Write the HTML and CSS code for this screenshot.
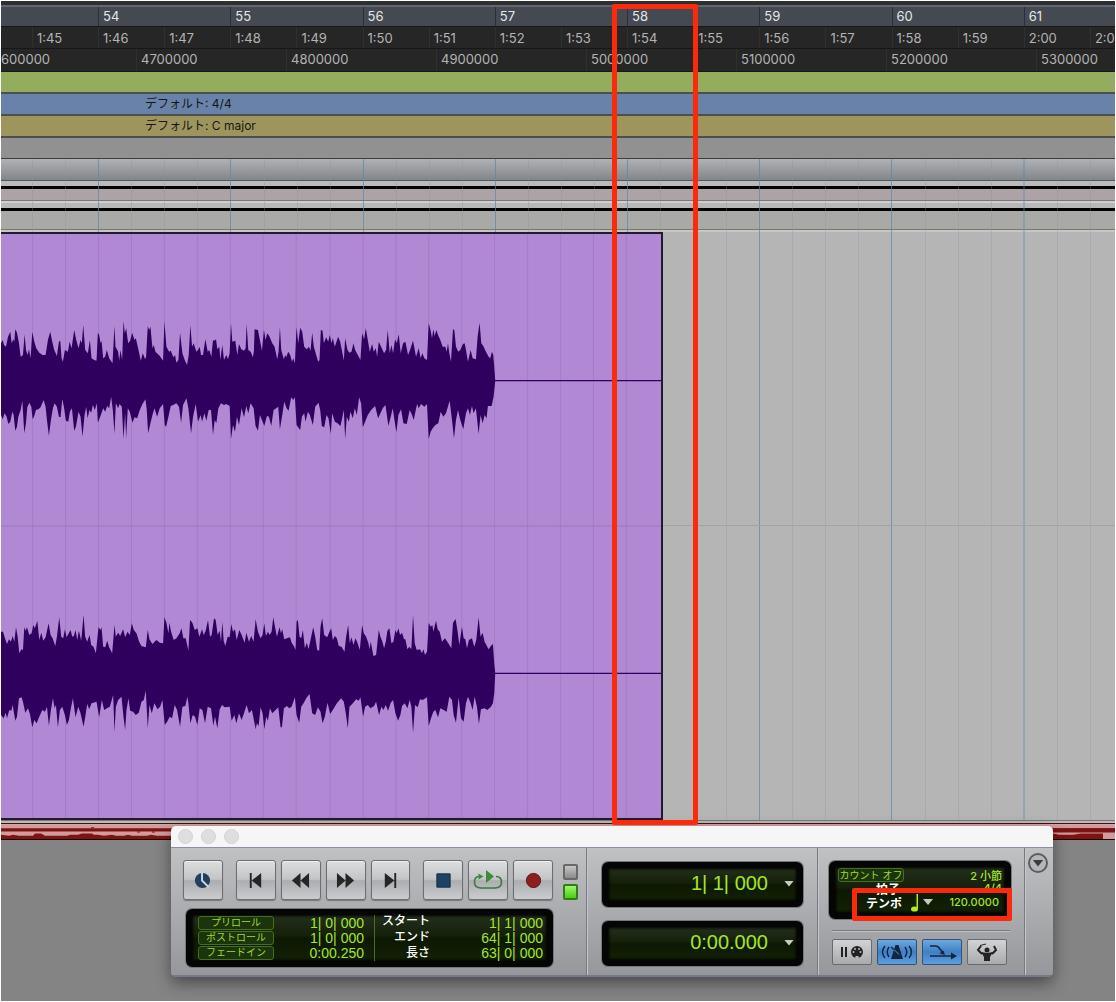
FILE: index.html
```html
<!DOCTYPE html>
<html lang="ja">
<head>
<meta charset="utf-8">
<title>Edit</title>
<link rel="stylesheet" href="styles.css">
</head>
<body>
<main class="editor">
  <div class="top-strip"></div>
  <section class="rulers">
    <div class="ruler ruler-bars"><span></span><span>54</span><span>55</span><span>56</span><span>57</span><span>58</span><span>59</span><span>60</span><span>61</span></div>
    <div class="ruler ruler-time"><span></span><span>1:45</span><span>1:46</span><span>1:47</span><span>1:48</span><span>1:49</span><span>1:50</span><span>1:51</span><span>1:52</span><span>1:53</span><span>1:54</span><span>1:55</span><span>1:56</span><span>1:57</span><span>1:58</span><span>1:59</span><span>2:00</span><span>2:0</span></div>
    <div class="ruler ruler-samples"><span>600000</span><span>4700000</span><span>4800000</span><span>4900000</span><span>5000000</span><span>5100000</span><span>5200000</span><span>5300000</span></div>
    <div class="lane lane-tempo"></div>
    <div class="lane lane-meter">デフォルト: 4/4</div>
    <div class="lane lane-key">デフォルト: C major</div>
    <div class="lane lane-markers"></div>
  </section>

  <section class="tracks">
    <div class="track track-head"></div>
    <div class="track track-pink"></div>
    <div class="track track-olive"></div>
    <svg class="gridlines" viewBox="0 0 1114 10" preserveAspectRatio="none" aria-hidden="true">
      <path class="beat" d="M31.500 0v10M64.500 0v10M130.500 0v10M163.500 0v10M196.500 0v10M263.500 0v10M296.500 0v10M329.500 0v10M395.500 0v10M428.500 0v10M461.500 0v10M527.500 0v10M560.500 0v10M593.500 0v10M659.500 0v10M692.500 0v10M725.500 0v10M791.500 0v10M824.500 0v10M857.500 0v10M924.500 0v10M957.500 0v10M990.500 0v10M1056.500 0v10M1089.500 0v10"/>
      <path class="bar" d="M97.500 0v10M229.500 0v10M362.500 0v10M494.500 0v10M626.500 0v10M758.500 0v10M890.500 0v10M1023 0v10"/>
    </svg>
    <div class="audio-track">
      <div class="clip">
        <svg viewBox="3 702 1983 1752" preserveAspectRatio="none" aria-hidden="true">
          <path class="clip-beat" d="M98 702v1752M197 702v1752M296 702v1752M395 702v1752M494 702v1752M593 702v1752M692 702v1752M791 702v1752M890 702v1752M992 702v1752M1091 702v1752M1190 702v1752M1288 702v1752M1387 702v1752M1486 702v1752M1585 702v1752M1684 702v1752M1783 702v1752M1882 702v1752"/>
          <path class="clip-mid" d="M0 1578h1986"/>
          <path class="silence" d="M1480 1140h506v4h-506zM1480 2018h506v4h-506z"/>
          <path class="wave" d="M3 1100h1481v80H3zM3 1980h1481v80H3z"/>
          <g class="wave" transform="translate(0 900)">
            <path d="M3 240L3 130 8 120 12 135 18 140 24 110 31 95 35 130 40 118 43 125 46 88 51 98 57 130 62 170 69 165 74 103 78 150 83 165 87 148 92 175 97 95 103 125 109 145 118 158 128 165 137 165 144 120 151 95 157 125 163 150 171 168 177 125 181 122 185 175 189 185 195 150 204 155 209 125 215 145 223 90 229 120 236 145 242 120 246 130 250 75 256 150 264 160 270 120 275 175 283 180 290 182 294 98 298 105 302 130 305 122 310 175 316 170 321 150 328 175 338 190 344 78 347 140 355 155 358 182 362 150 367 180 371 63 375 100 379 85 385 130 391 122 397 98 404 120 408 115 414 140 423 182 429 160 436 178 439 170 444 78 448 90 452 80 458 145 462 135 467 155 480 168 490 182 494 63 500 140 508 155 513 152 521 172 526 165 530 188 536 180 541 98 548 160 555 180 562 195 567 165 572 75 577 140 582 130 590 155 595 150 600 140 604 165 610 165 617 118 624 155 629 150 635 170 640 120 644 122 649 118 653 148 659 140 662 180 668 135 673 180 680 165 685 178 690 160 694 70 698 125 707 122 713 165 718 132 725 148 733 152 738 145 741 72 746 150 753 155 760 172 764 150 768 88 768 240Z"/>
            <path d="M3 240L3 345 8 358 14 340 20 350 25 372 31 365 37 335 41 345 46 392 51 380 55 350 62 330 67 302 73 400 78 370 82 322 88 308 94 320 98 358 103 348 108 330 115 328 122 322 131 300 137 320 141 360 147 407 153 360 159 325 164 310 171 320 177 350 182 352 187 298 192 320 198 362 205 365 210 335 216 325 223 392 228 380 236 335 242 350 248 410 254 345 259 320 263 355 269 330 274 338 279 315 285 330 291 310 294 368 301 350 310 325 316 335 322 318 328 325 334 290 339 330 344 402 348 310 355 325 359 312 366 320 371 417 376 340 379 415 384 325 390 335 398 368 404 352 412 355 420 330 428 312 437 298 441 330 445 400 452 370 458 345 464 325 472 350 480 325 490 312 495 375 499 380 506 350 513 318 520 315 530 310 538 320 544 368 550 315 560 295 566 325 574 400 580 350 588 312 595 365 603 345 607 365 614 340 620 362 627 330 634 330 640 405 645 360 650 370 656 325 664 310 673 315 680 312 690 318 694 417 700 375 706 395 712 350 718 375 726 325 733 352 740 318 746 340 753 310 762 325 768 380 770 240Z"/>
            <g transform="translate(750 0)">
              <path d="M10 240L15 88 25 90 37 152 43 90 48 120 53 100 60 110 68 130 75 140 83 178 87 155 91 82 95 150 103 178 107 165 110 172 116 155 122 165 127 185 131 175 136 190 141 80 146 130 152 83 158 95 164 140 172 148 178 140 183 152 188 98 193 140 200 165 206 185 210 180 214 90 219 92 223 130 230 112 236 125 241 105 246 130 250 115 256 140 261 125 266 110 272 125 280 165 283 182 287 115 294 150 300 158 306 155 312 130 317 150 325 165 333 180 338 100 344 118 349 85 355 120 361 155 368 132 373 155 379 145 383 170 388 125 395 140 404 160 410 150 415 90 421 160 426 135 431 160 437 118 442 130 448 103 454 160 461 130 468 125 476 165 482 150 491 122 500 170 508 145 514 175 519 160 525 175 533 180 538 70 543 88 548 115 552 88 556 108 561 90 566 105 572 118 580 140 588 140 592 155 596 130 600 160 605 185 611 88 615 90 620 140 627 155 633 150 641 132 646 130 650 150 656 185 664 150 670 175 680 178 685 110 691 68 696 130 702 138 710 155 718 170 723 175 728 155 732 165 735 200 738 242Z"/>
              <path d="M10 240L18 378 25 392 31 345 37 360 44 378 52 348 58 350 65 378 72 330 80 325 86 320 91 388 98 345 104 305 111 325 117 332 125 292 131 300 136 292 141 375 152 390 157 350 164 340 168 365 175 335 181 345 190 375 197 320 207 308 212 330 217 378 224 382 231 345 237 355 244 402 248 340 256 365 264 370 273 378 280 345 283 330 287 417 292 350 298 365 303 335 310 355 316 325 322 345 329 292 335 310 340 382 347 365 355 345 365 330 377 318 386 355 393 340 400 325 408 315 417 378 424 350 430 325 436 365 441 397 447 345 455 328 462 370 472 372 481 330 488 345 493 360 503 312 508 325 515 312 525 320 533 312 538 417 544 395 550 385 558 375 567 370 574 335 582 350 590 340 601 302 608 360 614 415 620 360 626 330 633 360 642 388 650 340 656 325 662 345 668 318 673 340 680 325 688 402 694 345 700 370 706 345 712 355 716 318 727 318 733 290 738 242Z"/>
            </g>
          </g>
          <g class="wave" transform="translate(0 1800)">
            <path d="M3 220L3 95 9 95 15 115 21 132 27 118 33 125 38 108 43 125 48 82 53 110 58 160 64 148 69 150 73 82 77 92 81 82 88 105 95 100 100 75 105 85 112 62 118 120 124 98 130 122 137 112 146 70 152 105 158 115 166 138 171 110 178 52 184 110 190 115 195 88 200 112 212 90 217 110 222 108 227 90 232 120 237 92 244 122 251 45 256 110 262 125 269 105 274 135 281 140 288 160 296 82 302 90 305 82 310 140 316 142 322 122 328 142 337 160 344 75 348 110 355 98 361 108 370 88 376 112 383 95 390 105 396 70 402 90 410 100 418 125 425 138 438 142 444 90 449 118 458 132 470 120 480 128 490 130 494 52 500 68 506 100 509 68 514 95 522 120 530 115 540 100 545 85 551 115 558 115 566 152 571 60 578 68 585 90 593 85 599 110 607 88 612 105 618 92 625 60 631 110 636 105 643 55 648 60 654 105 660 92 664 125 668 65 672 122 677 138 684 110 690 112 695 72 700 95 706 88 711 120 719 90 726 105 735 128 740 98 748 125 755 108 762 125 768 58 768 220Z"/>
            <path d="M3 220L3 345 11 355 17 338 21 355 28 330 34 332 38 315 46 362 51 350 57 295 65 292 70 310 76 338 84 325 90 342 97 382 103 360 110 370 118 350 127 330 135 335 141 320 147 377 153 330 159 295 164 325 168 315 174 382 180 330 187 320 195 345 201 375 207 360 213 325 219 295 227 352 235 320 242 340 251 380 257 345 262 312 268 328 275 310 290 305 298 352 306 300 313 330 321 325 330 320 340 285 344 397 348 320 355 300 365 290 371 350 376 390 380 330 386 295 391 332 400 335 408 345 417 338 425 305 432 300 438 272 444 385 449 315 456 340 464 310 473 328 481 320 488 300 495 375 502 365 510 350 517 355 525 315 532 330 541 380 548 320 557 318 563 290 566 310 572 370 579 345 586 350 593 375 600 325 608 330 616 370 624 320 634 325 641 377 646 350 653 385 660 328 667 315 675 322 690 320 696 362 704 345 710 370 718 340 726 360 733 340 741 315 748 340 757 330 768 388 770 220Z"/>
            <g transform="translate(750 0)">
              <path d="M10 220L18 58 25 95 33 115 39 105 44 70 49 108 55 95 60 105 66 95 71 52 77 85 82 110 90 82 94 100 98 88 104 118 112 115 121 112 127 130 133 138 138 150 141 65 145 60 150 110 155 115 160 90 166 145 172 128 177 148 184 115 191 82 197 110 203 150 209 152 213 80 218 55 224 105 233 112 240 95 245 85 250 120 256 108 262 115 268 138 276 140 285 155 290 110 296 75 301 130 306 112 312 135 318 115 324 128 331 150 338 75 343 100 350 110 357 130 360 148 364 125 372 168 380 165 388 90 393 110 399 125 404 145 409 125 414 92 420 85 426 130 432 125 438 90 442 100 447 85 452 105 458 98 464 118 468 118 474 148 480 140 486 148 491 45 496 130 502 150 512 148 518 160 522 148 527 165 533 155 538 68 544 80 549 75 552 95 560 62 565 88 571 95 578 125 587 115 596 128 606 145 611 68 619 57 625 95 630 135 638 80 643 115 648 118 653 145 659 120 668 115 675 140 681 120 688 52 694 110 700 98 706 125 718 148 725 138 731 132 735 190 738 220Z"/>
              <path d="M10 220L18 388 22 370 27 378 33 322 39 340 44 388 50 350 55 362 61 325 68 340 78 330 86 322 93 382 97 382 103 325 112 318 119 325 126 320 136 292 141 345 149 368 155 320 162 310 170 295 180 282 188 340 197 345 205 322 213 335 219 370 226 350 234 308 242 342 250 330 262 310 275 295 283 305 289 340 295 385 300 320 310 310 320 298 328 302 333 292 341 350 347 320 355 315 363 325 374 318 380 305 389 345 396 320 402 330 409 315 416 332 424 308 431 300 438 340 446 362 453 345 458 318 466 310 474 325 481 300 486 320 491 398 497 315 505 322 512 298 520 300 533 292 538 378 545 355 552 335 558 330 566 352 573 325 583 330 592 335 600 290 608 300 613 345 620 368 628 292 635 355 643 365 650 310 656 290 664 310 670 330 676 290 683 320 689 372 695 328 706 325 714 330 725 320 731 310 735 280 738 220Z"/>
            </g>
          </g>
        </svg>
      </div>
      <div class="empty"></div>
    </div>
    <div class="track-foot"></div>
  </section>
  <div class="red-track">
    <svg viewBox="0 0 1114 13" preserveAspectRatio="none" aria-hidden="true">
      <path class="red-fill" d="M0 3h1114v3H0zM0 13V9l8 1 4-1 6 1h14l2-2h6l4 2h22l3-1h8l4-1h10l2 1h4l6 1 8-1 4 1h8l4-1 4 1h15l4-1 6 1H882l6-2h20l8 1h14l6-1h12l8 1h22l8-1h14l8 1h20l8-1h16l6 1h14l8-1h22v5z"/>
      <path class="red-fill" d="M90 2h3v1h-3zM136 6h3v1h-3zM151 6h3v1h-3zM1052 3h62v4h-62z"/>
    </svg>
  </div>
  <div class="desk"></div>

  <section class="transport" aria-label="Transport">
    <header class="titlebar"><i></i><i></i><i></i></header>
    <div class="panel">
      <div class="section section-main">
        <div class="controls">
          <button class="key online" aria-label="Online"><svg viewBox="0 0 20 20"><circle cx="10" cy="10" r="8" fill="#20405f"/><path fill="none" stroke="#d4d5d7" stroke-width="2" d="M9.500 1v9l7 7"/></svg></button>
          <button class="key" aria-label="Return to zero"><svg viewBox="0 0 20 20"><path fill="#262626" d="M4 2h2v16H4zM6 10l10-8v16z"/></svg></button>
          <button class="key" aria-label="Rewind"><svg viewBox="0 0 20 20"><path fill="#262626" d="M1 10l9-8v16zM10 10l9-8v16z"/></svg></button>
          <button class="key" aria-label="Fast forward"><svg viewBox="0 0 20 20"><path fill="#262626" d="M19 10L10 2v16zM10 10L1 2v16z"/></svg></button>
          <button class="key" aria-label="Go to end"><svg viewBox="0 0 20 20"><path fill="#262626" d="M14 2h2v16h-2zM14 10L4 2v16z"/></svg></button>
          <button class="key stop" aria-label="Stop"><svg viewBox="0 0 20 20"><path fill="#1d4265" stroke="#142c44" d="M3 3h14v14H3z"/></svg></button>
          <button class="key" aria-label="Play"><svg class="wide" viewBox="0 0 30 20"><path fill="none" stroke="#3d7a3f" stroke-width="1.600" d="M6 6.500C3 6.500 1.500 8.500 1.500 12S3.500 18 8 18h14c4.500 0 6.500-2 6.500-6S26 6.500 23 6.500"/><path fill="#3d8a3c" d="M13 0l8 6.500-8 6.500zM5.500 3.500l5 3-5 3z"/></svg></button>
          <button class="key" aria-label="Record"><svg viewBox="0 0 20 20"><circle cx="10" cy="10" r="7.500" fill="#8d1f1f" stroke="#601515"/></svg></button>
          <div class="leds"><i></i><i class="on"></i></div>
        </div>
        <div class="display display-roll">
          <div class="roll-col roll-buttons"><button>プリロール</button><button>ポストロール</button><button>フェードイン</button></div>
          <div class="roll-col roll-values"><span>1| 0| 000</span><span>1| 0| 000</span><span>0:00.250</span></div>
          <div class="roll-col roll-names"><span>スタート</span><span>エンド</span><span>長さ</span></div>
          <div class="roll-col roll-values last"><span>1| 1| 000</span><span>64| 1| 000</span><span>63| 0| 000</span></div>
        </div>
      </div>
      <div class="section section-counters">
        <div class="display counter"><span>1| 1| 000</span><button class="drop" aria-label="Main counter format"></button></div>
        <div class="display counter"><span>0:00.000</span><button class="drop" aria-label="Sub counter format"></button></div>
      </div>
      <div class="section section-tempo">
        <div class="display tempo">
          <div class="tempo-row"><button class="countoff">カウント オフ</button><span class="small">2 小節</span></div>
          <div class="tempo-row meter"><span class="name">拍子</span><span class="small">4/4</span></div>
          <div class="tempo-row beat-row"><span class="name">テンポ</span><svg class="note" viewBox="0 0 8 18"><ellipse cx="3.500" cy="15" rx="3.500" ry="2.600"/><path d="M5.500 0H7v15H5.500z"/></svg><button class="drop" aria-label="Tempo unit"></button><span class="small">120.0000</span></div>
        </div>
        <hr>
        <div class="modes">
          <button aria-label="Wait for note"><svg viewBox="0 0 32 18"><path fill="#222" d="M5 4h2v10H5zM9 4h2v10H9z"/><circle cx="21" cy="9" r="6" fill="#222"/><g fill="#bbb"><circle cx="17.500" cy="9" r="1"/><circle cx="19" cy="6" r="1"/><circle cx="23" cy="6" r="1"/><circle cx="24.500" cy="9" r="1"/><path d="M19.500 13h3v2h-3z"/></g></svg></button>
          <button class="on" aria-label="Metronome"><svg viewBox="0 0 32 18"><path fill="none" stroke="#12263c" stroke-width="1.400" d="M4 3q-5 6 0 12M8 4q-3.500 5 0 10M28 3q5 6 0 12M24 4q3.500 5 0 10M10 4l7 6"/><path fill="#12263c" d="M14.500 2h3l4.500 14H10z"/><path stroke="#5b9bdb" d="M13 6.500l5 5"/></svg></button>
          <button class="on" aria-label="MIDI merge"><svg viewBox="0 0 32 18"><path fill="none" stroke="#12263c" stroke-width="1.600" d="M4 3h6q2 0 4 3l3 4M4 13h22"/><path fill="#12263c" d="M25 9.500l6 3.500-6 3.500zM19 12l-5.500-1.500 4-3z"/></svg></button>
          <button aria-label="Conductor"><svg viewBox="0 0 32 18"><circle cx="16" cy="7" r="2.500" fill="#222"/><path fill="#222" d="M10 9l6 1 6-1-3 5v4h-6v-4z"/><path fill="none" stroke="#222" stroke-width="2" d="M11 11L7 7l3-4M21 11l4-4-2-4"/><path stroke="#222" d="M9 2.500l6-1.500"/></svg></button>
        </div>
      </div>
      <div class="section section-menu"><button class="menu" aria-label="Options"><i></i></button></div>
    </div>
  </section>
  <div class="mark mark-bar"></div>
  <div class="mark mark-tempo"></div>
</main>
</body>
</html>
```
FILE: styles.css
```css
* { box-sizing: border-box; }
body {
  margin: 0;
  padding: 1px;
  background: #fff;
  font-family: Inter, "Noto Sans CJK JP", sans-serif;
  font-size: 13px;
}
button { margin: 0; padding: 0; font: inherit; }
.editor {
  position: relative;
  display: flex;
  flex-direction: column;
  min-height: calc(100vh - 2px);
  overflow: hidden;
  background: #848484;
}
.top-strip { height: 4px; background: #2d2f31; }

/* rulers */
.ruler, .lane { height: 22px; line-height: 22px; overflow: hidden; }
.ruler { display: grid; background: #262626; color: #b4b4b4; border-bottom: 1px solid #171717; white-space: nowrap; }
.ruler span { min-width: 0; padding-left: 4px; border-left: 1px solid #303030; line-height: 22px; }
.ruler span:first-child { border-left: 0; }
.ruler-bars {
  grid-template-columns: 388fr repeat(7, 529fr) 365fr;
  background: #454a52;
  border-top: 2px solid #62666e;
  color: #e6e7ea;
}
.ruler-bars span { border-left-color: #2c3036; line-height: 19px; }
.ruler-time { grid-template-columns: 247fr repeat(16, 529fr) 201fr; }
.ruler-samples { grid-template-columns: 135fr repeat(6, 150fr) 79fr; height: 23px; }
.ruler-samples span { line-height: 21px; }
.ruler-samples span:first-child { padding-left: 0; }
.lane { padding-left: 144px; line-height: 20px; color: #161616; border-bottom: 2px solid #4d4f4f; }
.lane-tempo { background: #94ac5d; }
.lane-meter { background: #6882a9; }
.lane-key { background: #9e955e; }
.lane-markers { height: 21px; background: #919191; border-bottom: 1px solid #3c3d3e; }
.lane-meter, .lane-key { font-size: 12px; }

/* tracks */
.tracks { position: relative; background: #b5b5b5; }
.track { height: 22px; }
.track-head { background: linear-gradient(#b0b2b5, #82858a); border-bottom: 1px solid #55585a; }
.track-pink { border-top: 5px solid #bbb; border-bottom: 2px solid #cfcfcf; background: linear-gradient(#000 3px, #ada3a7 3px 14px, #777 14px); }
.track-olive { height: 29px; border-top: 5px solid #b9b8b9; border-bottom: 2px solid #c6c6c4; background: linear-gradient(#000 3px, #a9aaa5 3px 21px, #777 21px); }
.gridlines { position: absolute; left: 0; top: 0; width: 100%; height: 100%; }
.gridlines path, .clip-beat, .clip-mid { vector-effect: non-scaling-stroke; fill: none; }
.gridlines .beat { stroke: #8f90a8; stroke-opacity: .3; }
.gridlines .bar { stroke: #5a86ac; stroke-opacity: .7; }
.audio-track { position: relative; display: grid; grid-template-columns: 662fr 452fr; height: 588px; }
.clip { background: #b088d3; border: solid #241a2e; border-width: 2px 2px 2px 0; }
.clip svg { display: block; width: 100%; height: 100%; }
.clip-beat { stroke: #8d6bb2; stroke-opacity: .35; }
.clip-mid { stroke: #9878b6; }
.silence, .wave { fill: #2f005e; }
.empty { background: linear-gradient(#a3a3a3, #a3a3a3) 0 293px / 100% 1px no-repeat; }
.track-foot { position: relative; height: 5px; background: linear-gradient(#777 1px, #bbb 1px 3px, #3c1512 3px 4px, #d9a3a3 4px); }
.red-track { height: 15px; background: #d39c9c; border-bottom: 1px solid #240505; }
.red-track svg { display: block; width: 100%; height: 14px; }
.red-fill { fill: #7d1414; }
.desk { flex: 1; min-height: 161px; background: #848484; }

/* transport window */
.transport {
  position: absolute;
  left: 170px;
  top: 825px;
  width: 882px;
  border-radius: 5px;
  overflow: hidden;
  box-shadow: 0 6px 16px rgba(0, 0, 0, .45);
}
.titlebar { display: flex; gap: 8px; align-items: center; height: 22px; padding-left: 7px; background: #f6f6f6; border-bottom: 1px solid #8b8da6; }
.titlebar i { width: 15px; height: 15px; border-radius: 50%; background: #dedede; border: 1px solid #d2d2d2; }
.panel { display: flex; background: linear-gradient(#c0c1c3, #96979b); border-bottom: 2px solid #777a8c; }
.section { padding: 12px; border-right: 1px solid #777a84; box-shadow: 1px 0 #c6c7c9; }
.section-main { width: 416px; padding: 12px 8px 8px 12px; }
.controls { display: flex; gap: 5px; height: 40px; }
.key {
  display: grid;
  place-items: center;
  width: 40px;
  height: 40px;
  border: 1px solid #6d6e72;
  border-radius: 3px;
  background: linear-gradient(#dddee0, #c3c4c6 48%, #acadb0 52%, #cbcccf);
  box-shadow: 0 1px 1px #77787c, inset 0 1px #f0f0f0;
}
.key svg { width: 19px; height: 19px; }
.key svg.wide { width: 30px; height: 20px; }
.online { margin-right: 8px; }
.stop { margin-left: 8px; }
.leds { display: grid; gap: 4px; margin-left: 5px; padding: 4px 0 0; height: 40px; }
.leds i { width: 15px; height: 16px; border: 2px solid #66686a; border-radius: 2px; background: linear-gradient(#c5c5c5, #8b8b8b); }
.leds .on { border-color: #327b17; background: linear-gradient(#9cf573, #4dcc12); }
.display {
  border: 6px solid #050505;
  border-radius: 6px;
  background: linear-gradient(#24301d, #142009 45%, #0d1803 50%, #122104);
  box-shadow: 0 0 0 1px #77787b, inset 0 0 3px 1px #000;
  color: #a4e52c;
}
.display-roll { display: flex; width: 367px; height: 58px; margin: 9px 0 0 3px; padding-left: 6px; font-family: "Liberation Sans", "Noto Sans CJK JP", sans-serif; font-size: 14px; }
.roll-col { display: grid; grid-template-rows: repeat(3, 15px); align-content: center; text-align: right; line-height: 15px; white-space: nowrap; }
.roll-buttons { width: 76px; }
.roll-buttons button, .countoff { border: 1px solid #43701c; border-radius: 3px; background: #1c340d; color: #9ddc2b; font-size: 10px; line-height: 12px; }
.roll-buttons button { height: 14px; }
.roll-values { width: 90px; }
.roll-names { width: 65px; margin-left: 10px; padding-right: 9px; border-left: 1px solid #466f1d; color: #fff; font-size: 12px; font-weight: 500; line-height: 13px; grid-template-rows: repeat(3, 16px); align-content: start; }
.roll-values.last { width: 102px; margin-left: 2px; }
.section-counters { width: 231px; padding: 14px 14px 9px 15px; }
.counter { display: flex; align-items: center; justify-content: flex-end; gap: 16px; width: 201px; height: 45px; padding: 0 3px 2px 0; font-family: "Liberation Sans", sans-serif; font-size: 20px; }
.counter + .counter { margin-top: 14px; }
.drop { width: 10px; height: 6px; border: 0; background: #c7cbbf; clip-path: polygon(0 0, 100% 0, 50% 100%); }
.section-tempo { width: 207px; padding: 13px 11px 10px; }
.tempo { width: 182px; height: 58px; padding: 1px 3px; font-size: 10px; }
.tempo-row { display: flex; align-items: center; height: 14px; white-space: nowrap; }
.small { margin-left: auto; font-size: 11px; font-weight: 500; }
.countoff { width: 66px; height: 14px; }
.name { color: #fff; font-size: 12px; font-weight: 700; }
.tempo .meter { padding-left: 38px; height: 12px; }
.tempo .beat-row { padding: 0 3px 0 28px; height: 16px; }
.note { width: 8px; height: 18px; margin: 2px 4px 0 9px; fill: #b2ea1e; }
hr { height: 2px; margin: 11px 3px 7px; border: 0; border-top: 1px solid #7a7b7f; border-bottom: 1px solid #bfc0c2; }
.modes { display: flex; gap: 5px; padding-left: 3px; }
.modes button { display: grid; place-items: center; width: 40px; height: 26px; border: 1px solid #696a6d; border-radius: 2px; background: linear-gradient(#d2d3d5, #a9aaad); }
.modes svg { width: 32px; height: 18px; }
.modes .on { border-color: #31517a; background: linear-gradient(#6ea9e0, #3f7fc4 50%, #5d9ede); }
.section-menu { flex: 1; padding: 5px 3px; border: 0; box-shadow: none; }
.menu { display: grid; place-items: center; width: 20px; height: 20px; border: 2px solid #5c5d60; border-radius: 50%; background: #b5b6b9; }
.menu i { width: 11px; height: 7px; background: #3c3d40; clip-path: polygon(0 0, 100% 0, 50% 100%); }

/* annotation frames */
.mark { position: absolute; border: 5px solid #fb2a0b; border-radius: 2px; }
.mark-bar { left: 611px; top: 3px; width: 86px; height: 821px; }
.mark-tempo { left: 851px; top: 887px; width: 160px; height: 33px; }
```
